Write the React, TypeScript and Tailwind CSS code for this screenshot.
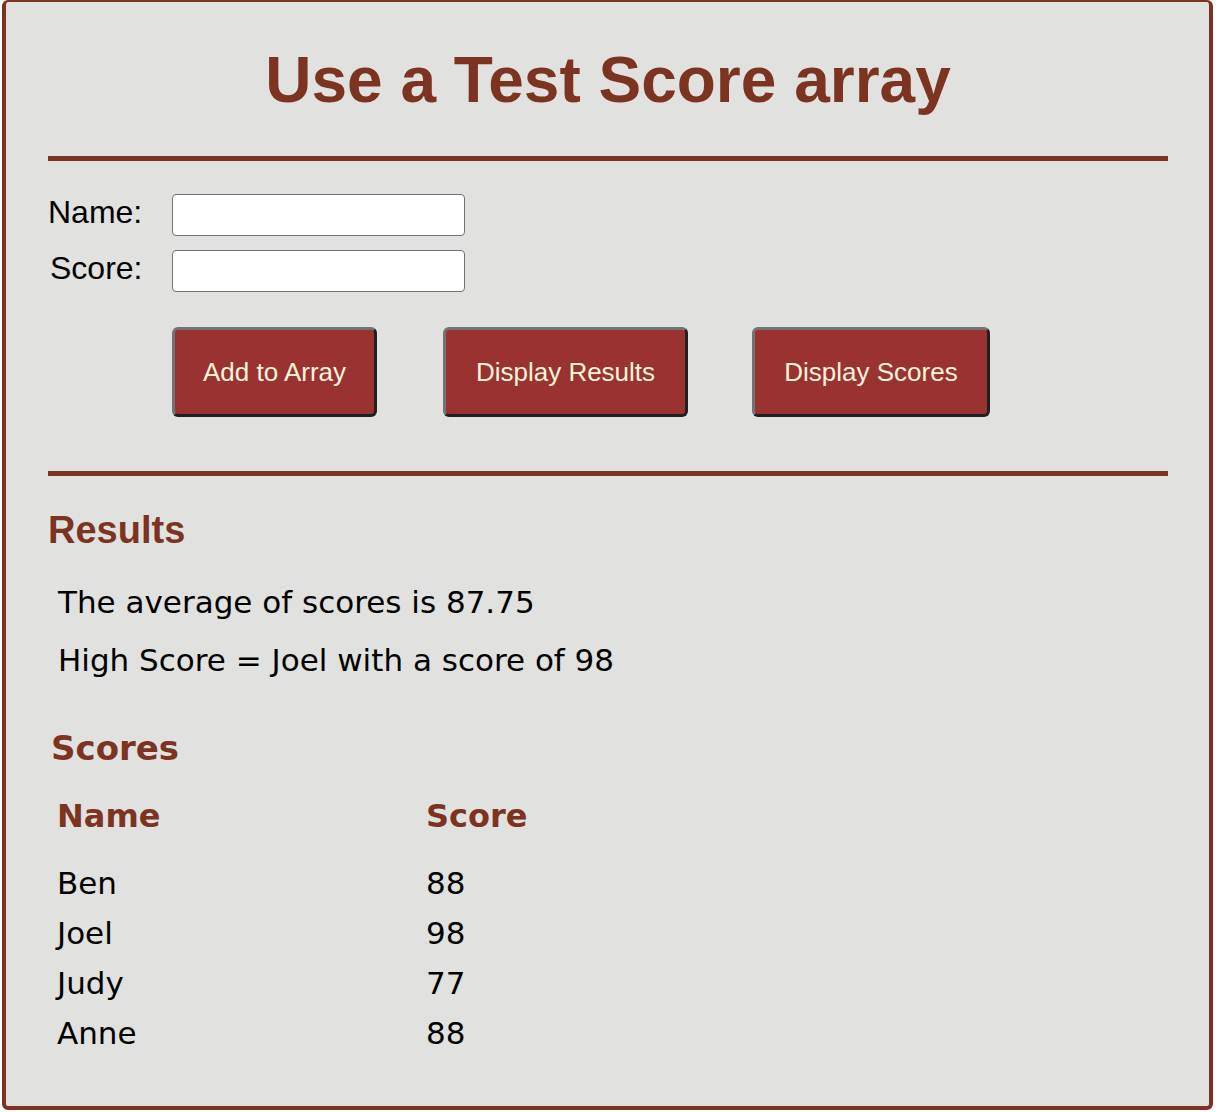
import React from "react";

const rows: [string, number][] = [
  ["Ben", 88],
  ["Joel", 98],
  ["Judy", 77],
  ["Anne", 88],
];

export default function App() {
  return (
    <div className="w-[1220px] h-[1112px] bg-white">
      <div className="ml-[2px] w-[1211px] h-[1110px] border-4 border-t-2 border-[#7d3321] rounded-[6px] bg-[#e1e2df] pl-[42px] pr-[41px] pt-[46px] flex flex-col">
        <h1 className="font-['Liberation_Sans',Arial,sans-serif] font-bold text-[64px] leading-[64px] text-center text-[#7d3321]">
          Use a Test Score array
        </h1>
        <div className="mt-[44px] h-[5px] bg-[#7d3321]" />
        <div className="mt-[33px] flex h-[42px] items-start font-['Liberation_Sans',Arial,sans-serif] text-[32px] leading-[36px] text-black">
          <label className="w-[124px]">Name:</label>
          <input className="w-[293px] h-[42px] bg-white border border-[#727272] rounded-[4px]" />
        </div>
        <div className="mt-[14px] flex h-[42px] items-start font-['Liberation_Sans',Arial,sans-serif] text-[32px] leading-[36px] text-black">
          <label className="w-[124px] pl-[2px]">Score:</label>
          <input className="w-[293px] h-[42px] bg-white border border-[#727272] rounded-[4px]" />
        </div>
        <div className="mt-[35px] flex h-[90px] pl-[124px] font-['Liberation_Sans',Arial,sans-serif] text-[26px] text-[#fcf5d9]">
          <button className="w-[205px] h-[90px] bg-[#993231] border-[3px] border-t-[#737373] border-l-[#737373] border-r-[#202020] border-b-[#202020] rounded-[6px]">
            Add to Array
          </button>
          <button className="ml-[66px] w-[245px] h-[90px] bg-[#993231] border-[3px] border-t-[#737373] border-l-[#737373] border-r-[#202020] border-b-[#202020] rounded-[6px]">
            Display Results
          </button>
          <button className="ml-[64px] w-[238px] h-[90px] bg-[#993231] border-[3px] border-t-[#737373] border-l-[#737373] border-r-[#202020] border-b-[#202020] rounded-[6px]">
            Display Scores
          </button>
        </div>
        <div className="mt-[54px] h-[5px] bg-[#7d3321]" />
        <h2 className="mt-[35px] font-['Liberation_Sans',Arial,sans-serif] font-bold text-[38px] leading-[38px] text-[#7d3321]">
          Results
        </h2>
        <div className="mt-[24px] pl-[10px] font-['DejaVu_Sans',sans-serif] text-[31px] leading-[58px] text-black">
          <p>The average of scores is 87.75</p>
          <p>High Score = Joel with a score of 98</p>
        </div>
        <h2 className="mt-[42px] pl-[3px] font-['DejaVu_Sans',sans-serif] font-bold text-[34px] leading-[34px] text-[#7d3321]">
          Scores
        </h2>
        <div className="mt-[31px] pl-[9px] font-['DejaVu_Sans',sans-serif]">
          <div className="grid grid-cols-[369px_1fr] text-[32px] leading-[40px] font-bold text-[#7d3321]">
            <div>Name</div>
            <div>Score</div>
          </div>
          <div className="mt-[22px] grid grid-cols-[369px_1fr] text-[31px] leading-[50px] text-black">
            {rows.map(([n, s]) => (
              <React.Fragment key={n}>
                <div>{n}</div>
                <div>{s}</div>
              </React.Fragment>
            ))}
          </div>
        </div>
      </div>
    </div>
  );
}
